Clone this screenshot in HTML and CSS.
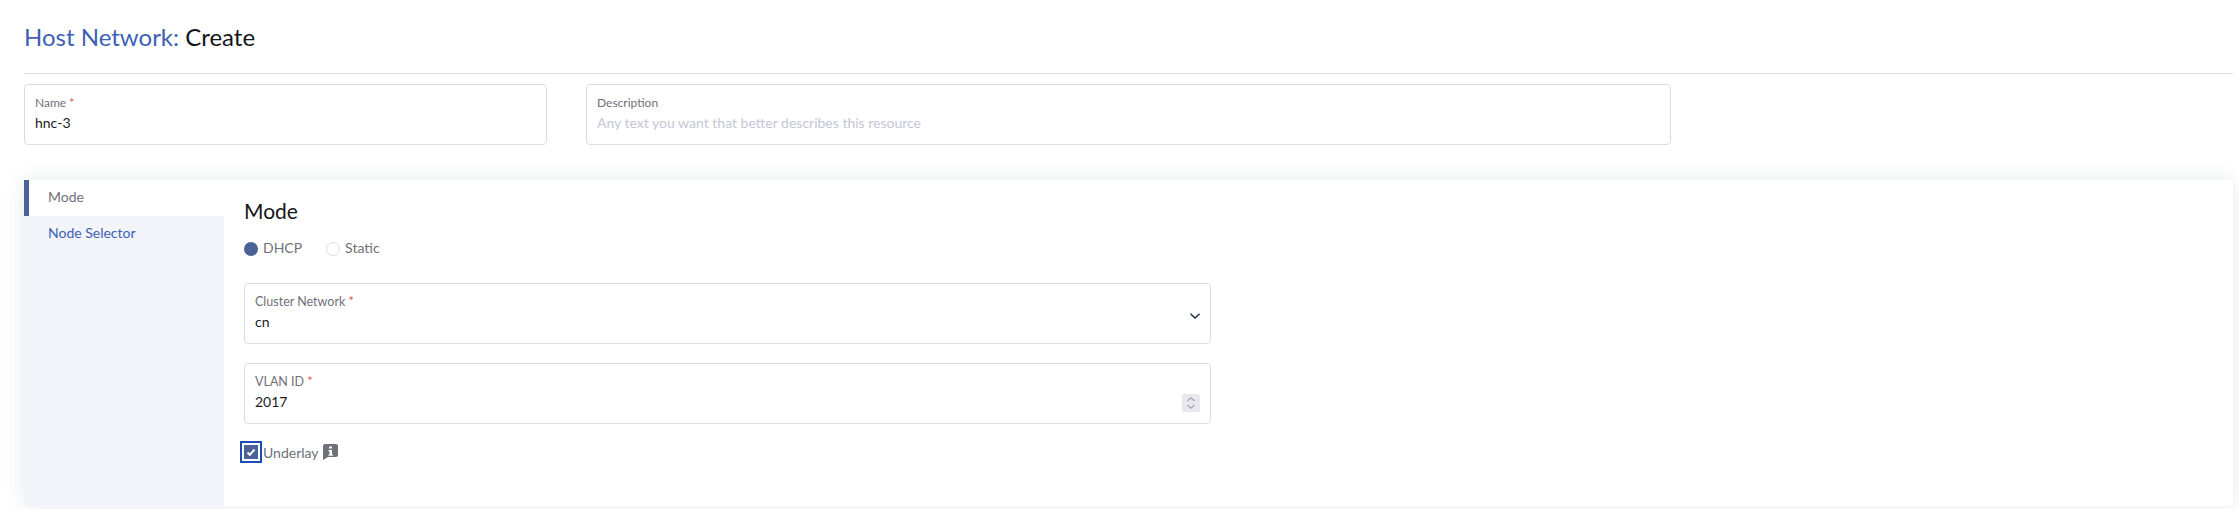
FILE: index.html
```html
<!DOCTYPE html>
<html>
	<head>
		<title>Host Network: Create</title>
		<link rel="stylesheet" href="styles.css">
	</head>
	<body>
		<main class="page">
			<h1 class="title"><span class="title-type">Host Network:</span> Create</h1>
			<div class="name-row">
				<label class="field field-name">
					<span class="field-label">Name <i class="req">*</i></span>
					<input type="text" value="hnc-3">
				</label>
				<label class="field field-desc">
					<span class="field-label">Description</span>
					<input type="text" placeholder="Any text you want that better describes this resource">
				</label>
			</div>
			<section class="card">
				<nav class="tabs">
					<a class="tab active">Mode</a>
					<a class="tab">Node Selector</a>
				</nav>
				<div class="tab-body">
					<h2>Mode</h2>
					<div class="radios">
						<span class="radio"><i class="dot on"></i>DHCP</span>
						<span class="radio"><i class="dot"></i>Static</span>
					</div>
					<div class="field field-wide">
						<span class="field-label">Cluster Network <i class="req">*</i></span>
						<input type="text" value="cn">
						<svg class="chevron" width="12" height="8" viewBox="0 0 12 8">
							<path d="M1.500 1.800 6 6l4.500-4.200" fill="none" stroke="#1b2a3f" stroke-width="1.400"/>
						</svg>
					</div>
					<div class="field field-wide">
						<span class="field-label">VLAN ID <i class="req">*</i></span>
						<input type="text" value="2017">
						<span class="spinner">
							<svg width="10" height="14" viewBox="0 0 10 14">
								<path d="M1.500 5 5 1.800 8.500 5M1.500 9 5 12.200 8.500 9" fill="none" stroke="#a3a3b2" stroke-width="1.200"/>
							</svg>
						</span>
					</div>
					<div class="check-row">
						<span class="check">
							<svg width="14" height="14" viewBox="0 0 14 14">
								<path d="M3.500 7.500 5.800 9.800 10.500 4.500" fill="none" stroke="#fff" stroke-width="2"/>
							</svg>
						</span>
						<span class="check-label">Underlay</span>
						<svg class="info" width="15" height="16" viewBox="0 0 15 16">
							<path d="M2 0h11a2 2 0 0 1 2 2v9a2 2 0 0 1-2 2H5l-5 3V2a2 2 0 0 1 2-2z" fill="#6f7078"/>
							<path d="M6 2.500h3v2H6zM5.500 6H9v4.500h1v1.200H5.500v-1.200h1V7.200h-1z" fill="#fff"/>
						</svg>
					</div>
				</div>
			</section>
		</main>
	</body>
</html>
```

FILE: styles.css
```css
html, body {
	margin: 0;
	padding: 0;
	height: 100%;
	background: #fff;
	font-family: "Lato", sans-serif;
	overflow: hidden;
}
.page {
	padding: 0 6px 0 24px;
}
.title {
	margin: 0;
	padding: 22px 0 15px;
	height: 36px;
	line-height: 30px;
	font-size: 24px;
	font-weight: 400;
	color: #141419;
	border-bottom: 1px solid #dcdce3;
}
.title-type {
	color: #3d5fb5;
}
.name-row {
	display: flex;
	gap: 39px;
	margin-top: 10px;
}
.field {
	display: block;
	position: relative;
	box-sizing: border-box;
	height: 61px;
	padding: 10px 10px 0;
	border: 1px solid #dcdce6;
	border-radius: 4px;
	background: #fff;
}
.field-name {
	width: 523px;
}
.field-desc {
	width: 1085px;
}
.field-wide {
	width: 967px;
	margin-bottom: 19px;
}
.field-label {
	display: block;
	font-size: 12px;
	line-height: 15px;
	color: #6f7078;
}
.field-wide .field-label {
	font-size: 12.5px;
}
.req {
	font-style: normal;
	color: #d9534f;
}
.field input {
	display: block;
	width: 100%;
	margin-top: 2px;
	padding: 0;
	border: none;
	outline: none;
	font-family: inherit;
	font-size: 14px;
	line-height: 22px;
	height: 22px;
	color: #1c1c22;
	background: transparent;
}
.field input::placeholder {
	color: #c5c6d6;
	opacity: 1;
}
.chevron {
	position: absolute;
	right: 9px;
	top: 28px;
}
.spinner {
	position: absolute;
	right: 10px;
	top: 30px;
	width: 18px;
	height: 18px;
	display: flex;
	align-items: center;
	justify-content: center;
	background: #e7e7ed;
	border-radius: 2px;
}
.card {
	display: flex;
	height: 326px;
	margin-top: 35px;
	background: #fff;
	border-radius: 4px;
	box-shadow: 0 0 20px rgba(60, 70, 110, 0.12);
}
.tabs {
	flex: 0 0 200px;
	background: #f2f4f9;
	border-radius: 4px 0 0 4px;
}
.tab {
	display: block;
	box-sizing: border-box;
	height: 36px;
	padding-left: 24px;
	line-height: 33px;
	font-size: 14px;
	color: #3d5fb5;
}
.tab.active {
	padding-left: 19px;
	border-left: 5px solid #4a6294;
	background: #fff;
	color: #6f7078;
}
.tab-body {
	flex: 1;
	padding: 0 0 0 20px;
}
h2 {
	margin: 0;
	padding-top: 18px;
	font-size: 21px;
	font-weight: 400;
	line-height: 26px;
	color: #141419;
}
.radios {
	display: flex;
	gap: 24px;
	margin: 14px 0 25px;
	font-size: 14px;
	line-height: 20px;
	color: #6f7078;
}
.radio {
	display: flex;
	align-items: center;
	gap: 5px;
}
.dot {
	box-sizing: border-box;
	width: 14px;
	height: 14px;
	margin-top: 2px;
	border: 1px solid #dcdce6;
	border-radius: 50%;
}
.dot.on {
	border: none;
	background: #4a6294;
}
.check-row {
	display: flex;
	align-items: center;
	margin-left: -4px;
	margin-top: -2px;
}
.check {
	box-sizing: border-box;
	width: 22px;
	height: 22px;
	border: 2px solid #1a4db5;
	padding: 2px;
	background: #fff;
}
.check svg {
	display: block;
	background: #4a6294;
}
.check-label {
	margin-left: 1px;
	font-size: 14px;
	color: #6f7078;
}
.info {
	margin-left: 4px;
	margin-top: -1px;
}
```
